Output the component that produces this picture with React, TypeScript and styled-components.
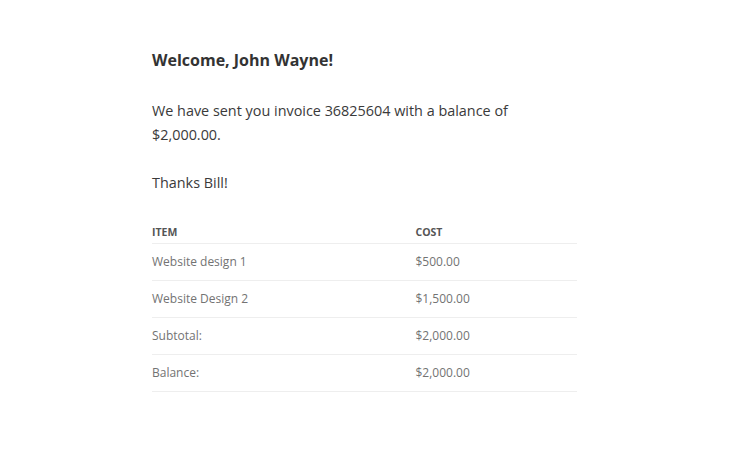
import React from 'react'
import styled, { createGlobalStyle } from 'styled-components'

const GlobalStyle = createGlobalStyle`
  body {
    margin: 0;
    background: #fff;
    font-family: 'Open Sans', 'Noto Sans', sans-serif;
    color: #333;
  }
`

const rows = [
  { item: 'Website design 1', cost: '$500.00' },
  { item: 'Website Design 2', cost: '$1,500.00' },
  { item: 'Subtotal:', cost: '$2,000.00' },
  { item: 'Balance:', cost: '$2,000.00' },
]

const App = () => {
  return (
    <>
      <GlobalStyle />
      <Page>
        <Content>
          <Heading>Welcome, John Wayne!</Heading>
          <Text>
            We have sent you invoice 36825604 with a balance of
            <br />
            $2,000.00.
          </Text>
          <Text>Thanks Bill!</Text>
          <Table>
            <thead>
              <tr>
                <Th>Item</Th>
                <Th>Cost</Th>
              </tr>
            </thead>
            <tbody>
              {rows.map((r, i) => (
                <tr key={i}>
                  <Td>{r.item}</Td>
                  <Td>{r.cost}</Td>
                </tr>
              ))}
            </tbody>
          </Table>
        </Content>
      </Page>
    </>
  )
}

export default App

const Page = styled.div`
  width: 750px;
  height: 450px;
  padding: 48px 0 0 152px;
  box-sizing: border-box;
`
const Content = styled.div`
  width: 425px;
`
const Heading = styled.h2`
  margin: 0 0 27px;
  font-size: 16px;
  font-weight: 700;
  line-height: 24px;
  color: #333;
`
const Text = styled.p`
  margin: 0 0 24px;
  font-size: 14.4px;
  line-height: 24px;
  color: #3a3a3a;
`
const Table = styled.table`
  width: 100%;
  border-collapse: collapse;
  margin-top: 29px;
`
const Th = styled.th`
  text-align: left;
  font-size: 10.5px;
  font-weight: 700;
  text-transform: uppercase;
  color: #555;
  padding: 0 0 3px;
  line-height: 16px;
  border-bottom: 1px solid #eee;

  &:first-child {
    width: 62%;
  }
`
const Td = styled.td`
  font-size: 12px;
  color: #737373;
  padding: 10px 0;
  line-height: 16px;
  border-bottom: 1px solid #eee;
`
